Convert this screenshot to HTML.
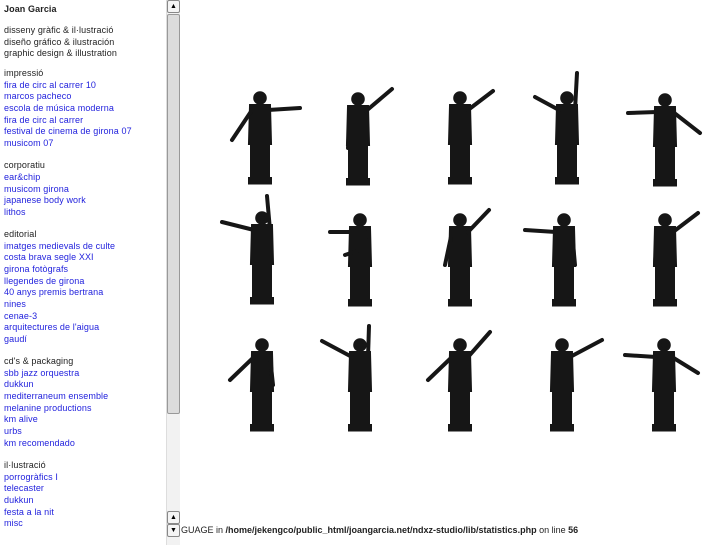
<!DOCTYPE html>
<html><head><meta charset="utf-8"><style>
body{margin:0;width:727px;height:545px;overflow:hidden;background:#fff;font-family:"Liberation Sans",sans-serif;font-size:9px;position:relative}
#side{position:absolute;left:0;top:0;width:166px;height:545px}
.t{position:absolute;left:4px;color:#222;white-space:nowrap;letter-spacing:0.1px}
.l{color:#2222dd}
#sb{position:absolute;left:166px;top:0;width:13px;height:545px;background:#f2f2f2;border-left:1px solid #ddd}
.btn{position:absolute;left:0;width:11px;height:11px;background:#f4f4f4;border:1px solid #888;border-radius:2px;font-size:7px;text-align:center;line-height:11px;color:#000}
#thumb{position:absolute;left:0;top:14px;width:11px;height:398px;background:#dcdcdc;border:1px solid #999;border-radius:2px}
#err{position:absolute;left:181px;top:525px;font-size:9px;color:#222;white-space:nowrap}
svg{position:absolute;left:0;top:0}
</style></head><body>
<div id="side">
<div class="t" style="top:4px;font-weight:bold">Joan Garcia</div>
<div class="t" style="top:25px">disseny gràfic &amp; il·lustració</div>
<div class="t" style="top:37px">diseño gráfico &amp; ilustración</div>
<div class="t" style="top:48px">graphic design &amp; illustration</div>
<div class="t" style="top:68px">impressió</div>
<div class="t l" style="top:80px">fira de circ al carrer 10</div>
<div class="t l" style="top:91px">marcos pacheco</div>
<div class="t l" style="top:103px">escola de música moderna</div>
<div class="t l" style="top:115px">fira de circ al carrer</div>
<div class="t l" style="top:126px">festival de cinema de girona 07</div>
<div class="t l" style="top:138px">musicom 07</div>
<div class="t" style="top:160px">corporatiu</div>
<div class="t l" style="top:172px">ear&amp;chip</div>
<div class="t l" style="top:184px">musicom girona</div>
<div class="t l" style="top:195px">japanese body work</div>
<div class="t l" style="top:207px">lithos</div>
<div class="t" style="top:229px">editorial</div>
<div class="t l" style="top:241px">imatges medievals de culte</div>
<div class="t l" style="top:252px">costa brava segle XXI</div>
<div class="t l" style="top:264px">girona fotògrafs</div>
<div class="t l" style="top:276px">llegendes de girona</div>
<div class="t l" style="top:287px">40 anys premis bertrana</div>
<div class="t l" style="top:299px">nines</div>
<div class="t l" style="top:311px">cenae-3</div>
<div class="t l" style="top:322px">arquitectures de l'aigua</div>
<div class="t l" style="top:334px">gaudí</div>
<div class="t" style="top:356px">cd's &amp; packaging</div>
<div class="t l" style="top:368px">sbb jazz orquestra</div>
<div class="t l" style="top:379px">dukkun</div>
<div class="t l" style="top:391px">mediterraneum ensemble</div>
<div class="t l" style="top:403px">melanine productions</div>
<div class="t l" style="top:414px">km alive</div>
<div class="t l" style="top:426px">urbs</div>
<div class="t l" style="top:438px">km recomendado</div>
<div class="t" style="top:460px">il·lustració</div>
<div class="t l" style="top:472px">porrogràfics I</div>
<div class="t l" style="top:483px">telecaster</div>
<div class="t l" style="top:495px">dukkun</div>
<div class="t l" style="top:507px">festa a la nit</div>
<div class="t l" style="top:518px">misc</div>
</div>
<div id="sb">
<div class="btn" style="top:0">▲</div>
<div id="thumb"></div>
<div class="btn" style="top:511px">▲</div>
<div class="btn" style="top:524px">▼</div>
</div>
<div id="err">GUAGE in <b>/home/jekengco/public_html/joangarcia.net/ndxz-studio/lib/statistics.php</b> on line <b>56</b></div>
<svg width="727" height="545">
<defs>
<g id="b" fill="#161616">
<circle cx="0" cy="0" r="4.8"/>
<path d="M-9 8 L9 8 L10 45 L-10 45 Z"/>
<rect x="-8" y="43" width="6.5" height="40"/>
<rect x="1.5" y="43" width="6.5" height="40"/>
<rect x="-10" y="81" width="8" height="3.5" fill="#333"/>
<rect x="2" y="81" width="8" height="3.5" fill="#333"/>
</g>
</defs>
<g stroke="#161616" stroke-width="4" stroke-linecap="round" fill="none">
<use href="#b" x="260" y="98"/><path d="M268 110 L300 108 M252 110 L232 140"/>
<use href="#b" x="358" y="99"/><path d="M366 111 L392 89 M350 111 L348 148"/>
<use href="#b" x="460" y="98"/><path d="M468 110 L493 91 M452 110 L452 150"/>
<use href="#b" x="567" y="98"/><path d="M575 110 L577 73 M559 110 L535 97"/>
<use href="#b" x="665" y="100"/><path d="M657 112 L628 113 M673 112 L700 133"/>
<use href="#b" x="262" y="218"/><path d="M270 230 L267 196 M254 230 L222 222"/>
<use href="#b" x="360" y="220"/><path d="M352 232 L330 232 M368 232 L360 250 L345 255"/>
<use href="#b" x="460" y="220"/><path d="M468 232 L489 210 M452 232 L445 265"/>
<use href="#b" x="564" y="220"/><path d="M556 232 L525 230 M572 232 L575 265"/>
<use href="#b" x="665" y="220"/><path d="M673 232 L698 213 M657 232 L655 265"/>
<use href="#b" x="262" y="345"/><path d="M254 357 L230 380 M270 357 L273 385"/>
<use href="#b" x="360" y="345"/><path d="M352 357 L322 341 M368 357 L369 326"/>
<use href="#b" x="460" y="345"/><path d="M468 357 L490 332 M452 357 L428 380"/>
<use href="#b" x="562" y="345"/><path d="M570 357 L602 340 M554 357 L555 385"/>
<use href="#b" x="664" y="345"/><path d="M656 357 L625 355 M672 357 L698 373"/>
</g>
</svg>
</body></html>
